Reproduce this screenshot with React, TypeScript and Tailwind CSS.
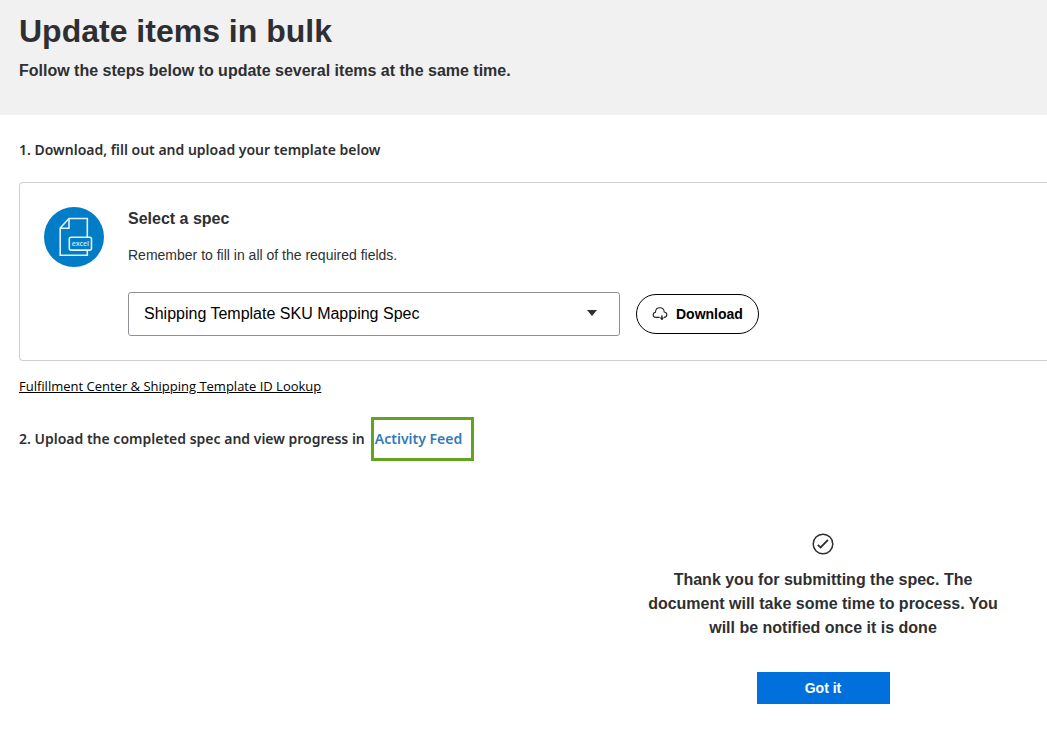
import React, { useState } from 'react';

const specs = ['Shipping Template SKU Mapping Spec'];

const ExcelIcon: React.FC = () => (
    <svg className="size-[60px] shrink-0" viewBox="0 0 60 60" fill="none" role="img" aria-label="excel">
        <circle cx="30" cy="30" r="30" fill="#007dc6" />
        <path d="M43.3 30.5V11.5H25L16.2 21V48.3H43.3V43.5" stroke="#e3f1fa" strokeWidth="1.6" />
        <path d="M25 11.5V21.3H16.2" stroke="#e3f1fa" strokeWidth="1.6" />
        <rect x="25.3" y="30.3" width="22.2" height="12.8" rx="1.8" fill="#007dc6" stroke="#e3f1fa" strokeWidth="1.6" />
        <text x="36.4" y="39.2" textAnchor="middle" fontSize="7" fontWeight="600" fontFamily="Noto Sans, sans-serif" fill="#c5e2f4">
            excel
        </text>
    </svg>
);

const CloudDownloadIcon: React.FC = () => (
    <svg className="size-4" viewBox="0 0 16 16" fill="none" stroke="#222" strokeWidth="1.1" aria-hidden="true">
        <path d="M7.6 11.4H4C2.2 11.4 1.2 10.2 1.2 8.9C1.2 7.5 2.2 6.5 3.5 6.3C3.5 3.4 5.4 1.7 7.9 1.7C10.4 1.7 12.1 3.5 12.2 6C13.8 6.3 14.8 7.3 14.8 8.8C14.8 10.3 13.6 11.4 12 11.4" />
        <path d="M9.9 9.2V13.4" strokeWidth="1.3" />
        <path d="M7.6 11.4H12.2L9.9 14.2Z" fill="#222" stroke="none" />
    </svg>
);

const App: React.FC = () => {
    const [spec, setSpec] = useState(specs[0]);
    const [showNotice, setShowNotice] = useState(true);

    return (
        <div className="overflow-x-hidden bg-white font-['Liberation_Sans',Arial,sans-serif] text-[#2e2f32]">
            <header className="bg-[#f1f1f1] px-[19px] pt-[11px] pb-8">
                <h1 className="text-[32px] leading-10 font-bold">Update items in bulk</h1>
                <p className="mt-2 text-base leading-6 font-bold">
                    Follow the steps below to update several items at the same time.
                </p>
            </header>

            <main className="flex flex-col items-start pt-[23px] pl-[19px]">
                <h2 className="font-['Noto_Sans',sans-serif] text-sm leading-6 font-semibold">
                    1. Download, fill out and upload your template below
                </h2>

                {/* Spec picker */}
                <section className="mt-5 flex gap-6 self-stretch rounded-l border border-r-0 border-[#cfcfd1] p-6">
                    <ExcelIcon />
                    <div className="min-w-0 flex-1">
                        <h3 className="text-base leading-6 font-bold">
                            <label htmlFor="spec">Select a spec</label>
                        </h3>
                        <p className="mt-3 text-sm leading-6">Remember to fill in all of the required fields.</p>
                        <div className="mt-[25px] flex items-center gap-4">
                            <div className="relative w-full max-w-[492px]">
                                <select
                                    id="spec"
                                    value={spec}
                                    onChange={(e) => setSpec(e.target.value)}
                                    className="block h-11 w-full appearance-none rounded-[3px] border border-[#909196] bg-white px-[15px] text-base text-black"
                                >
                                    {specs.map((name) => (
                                        <option key={name}>{name}</option>
                                    ))}
                                </select>
                                <svg
                                    className="pointer-events-none absolute top-[18px] right-[23px] h-1.5 w-2.5"
                                    viewBox="0 0 10 6"
                                    aria-hidden="true"
                                >
                                    <path d="M0 0H10L5 6Z" fill="#2e2f32" />
                                </svg>
                            </div>
                            <button
                                type="button"
                                className="flex h-10 shrink-0 items-center gap-2 rounded-full border border-black px-[15px] text-sm font-bold text-black"
                            >
                                <CloudDownloadIcon />
                                Download
                            </button>
                        </div>
                    </div>
                </section>

                <a
                    href="#lookup"
                    className="mt-[15px] font-['Open_Sans',sans-serif] text-[13px] leading-5 font-medium text-black underline"
                >
                    Fulfillment Center &amp; Shipping Template ID Lookup
                </a>

                <h2 className="mt-[21px] flex items-center gap-1.5 font-['Noto_Sans',sans-serif] text-sm leading-6 font-semibold">
                    2. Upload the completed spec and view progress in
                    <a
                        href="#activity-feed"
                        className="flex h-11 w-[103px] items-center border-3 border-[#62a420] pl-px text-[#337ab7]"
                    >
                        Activity Feed
                    </a>
                </h2>

                {showNotice && (
                    <div className="mt-[72px] mr-10 flex w-[368px] flex-col items-center self-end text-center">
                        <svg
                            className="size-[22px]"
                            viewBox="0 0 22 22"
                            fill="none"
                            stroke="#2e2f32"
                            strokeWidth="1.5"
                            aria-hidden="true"
                        >
                            <circle cx="11" cy="11" r="9.8" />
                            <path d="M5.8 11.8L8.6 14.4L16 6.8" strokeWidth="1.8" />
                        </svg>
                        <p className="mt-[13px] text-base leading-6 font-bold">
                            Thank you for submitting the spec. The document will take some time to process. You will be
                            notified once it is done
                        </p>
                        <button
                            type="button"
                            onClick={() => setShowNotice(false)}
                            className="mt-8 h-8 w-[133px] bg-[#0071dc] text-sm font-bold text-white"
                        >
                            Got it
                        </button>
                    </div>
                )}
            </main>
        </div>
    );
};

export default App;
